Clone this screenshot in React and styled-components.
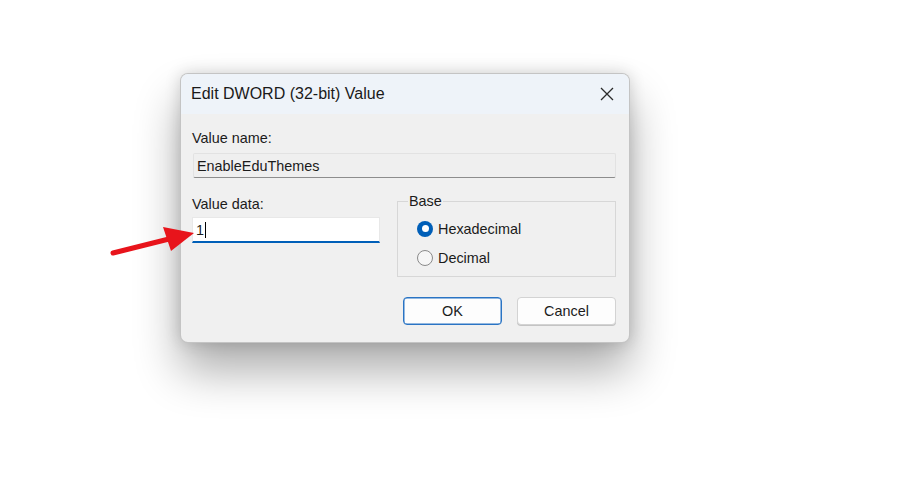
import React from "react";
import styled, { createGlobalStyle } from "styled-components";

const Global = createGlobalStyle`
  html, body { margin: 0; padding: 0; background: #ffffff; }
  body { font-family: "Liberation Sans", Arial, sans-serif; color: #1b1b1b; }
`;

const Page = styled.div`
  position: relative;
  width: 900px;
  height: 500px;
  overflow: hidden;
  background: #ffffff;
  padding: 73px 0 0 180px;
  box-sizing: border-box;
`;

const Dialog = styled.div`
  width: 450px;
  height: 270px;
  border-radius: 8px;
  background: #f0f0f0;
  border: 1px solid rgba(0, 0, 0, 0.18);
  box-sizing: border-box;
  box-shadow: 0 28px 46px rgba(0, 0, 0, 0.32), 0 0 16px rgba(0, 0, 0, 0.16);
  overflow: hidden;
  display: flex;
  flex-direction: column;
`;

const TitleBar = styled.div`
  height: 40px;
  background: #eef3f9;
  display: flex;
  align-items: center;
  justify-content: space-between;
  padding: 0 12px 0 10px;
  flex: none;
`;

const Title = styled.div`
  font-size: 16px;
  color: #1a1a1a;
`;

const CloseBtn = styled.div`
  width: 20px;
  height: 20px;
  display: flex;
  align-items: center;
  justify-content: center;
`;

const Body = styled.div`
  padding: 16px 13px 0 11px;
  display: flex;
  flex-direction: column;
  font-size: 14.4px;
`;

const Label = styled.div`
  color: #1b1b1b;
  line-height: 16px;
`;

const NameField = styled.div`
  margin: 7px 0 0 1px;
  height: 25px;
  box-sizing: border-box;
  background: #efefef;
  border: 1px solid #e2e2e2;
  border-bottom: 1px solid #8d8d8d;
  border-radius: 2px;
  display: flex;
  align-items: center;
  padding-left: 3px;
  color: #1b1b1b;
`;

const Row = styled.div`
  display: flex;
  margin-top: 16px;
`;

const DataCol = styled.div`
  width: 188px;
  display: flex;
  flex-direction: column;
  padding-top: 2px;
`;

const DataInput = styled.div`
  margin-top: 5px;
  height: 26px;
  box-sizing: border-box;
  background: #ffffff;
  border: 1px solid #e8e8e8;
  border-bottom: 2px solid #005fb8;
  display: flex;
  align-items: center;
  padding-left: 3px;
`;

const Caret = styled.span`
  display: inline-block;
  width: 1px;
  height: 16px;
  background: #000;
  margin-left: 1px;
`;

const Group = styled.fieldset`
  margin: -1px 0 0 17px;
  width: 219px;
  height: 84px;
  box-sizing: border-box;
  border: 1px solid #d7d7d7;
  padding: 9px 0 0 19px;
  display: flex;
  flex-direction: column;
  gap: 8px;
`;

const Legend = styled.legend`
  padding: 0 1px;
  margin-left: -9px;
  line-height: 16px;
`;

const RadioRow = styled.div`
  display: flex;
  align-items: center;
  gap: 5px;
  height: 21px;
`;

const RadioDot = styled.span`
  width: 16px;
  height: 16px;
  box-sizing: border-box;
  border-radius: 50%;
  flex: none;
  background: ${(p) => (p.$on ? "#005fb8" : "#f6f6f6")};
  border: ${(p) => (p.$on ? "none" : "1px solid #8a8a8a")};
  display: flex;
  align-items: center;
  justify-content: center;
  &::after {
    content: "";
    display: ${(p) => (p.$on ? "block" : "none")};
    width: 7px;
    height: 7px;
    border-radius: 50%;
    background: #ffffff;
  }
`;

const Buttons = styled.div`
  display: flex;
  justify-content: flex-end;
  gap: 15px;
  margin-top: 20px;
`;

const Button = styled.div`
  width: ${(p) => p.$w}px;
  height: 28px;
  box-sizing: border-box;
  border-radius: 4px;
  background: #fdfdfd;
  border: 1px solid ${(p) => (p.$primary ? "#2a74c4" : "#d3d3d3")};
  box-shadow: ${(p) => (p.$primary ? "inset 0 0 0 0.5px #2a74c4" : "0 1px 0 #c4c4c4")};
  display: flex;
  align-items: center;
  justify-content: center;
  color: #1b1b1b;
`;

const Arrow = styled.svg`
  position: absolute;
  left: 101px;
  top: 220px;
`;

export default function App() {
  return (
    <Page>
      <Global />
      <Dialog>
        <TitleBar>
          <Title>Edit DWORD (32-bit) Value</Title>
          <CloseBtn>
            <svg width="16" height="16" viewBox="0 0 16 16">
              <path d="M2 2 L14 14 M14 2 L2 14" stroke="#2a2a2a" strokeWidth="1.3" fill="none" />
            </svg>
          </CloseBtn>
        </TitleBar>
        <Body>
          <Label>Value name:</Label>
          <NameField>EnableEduThemes</NameField>
          <Row>
            <DataCol>
              <Label>Value data:</Label>
              <DataInput>
                1<Caret />
              </DataInput>
            </DataCol>
            <Group>
              <Legend>Base</Legend>
              <RadioRow>
                <RadioDot $on />
                Hexadecimal
              </RadioRow>
              <RadioRow>
                <RadioDot />
                Decimal
              </RadioRow>
            </Group>
          </Row>
          <Buttons>
            <Button $primary $w={99}>OK</Button>
            <Button $w={99}>Cancel</Button>
          </Buttons>
        </Body>
      </Dialog>
      <Arrow width="100" height="45" viewBox="0 0 100 45">
        <path d="M12 33 L68 19" stroke="#e8141b" strokeWidth="5" strokeLinecap="round" fill="none" />
        <polygon points="93,13 62,7 70,31" fill="#e8141b" />
      </Arrow>
    </Page>
  );
}
